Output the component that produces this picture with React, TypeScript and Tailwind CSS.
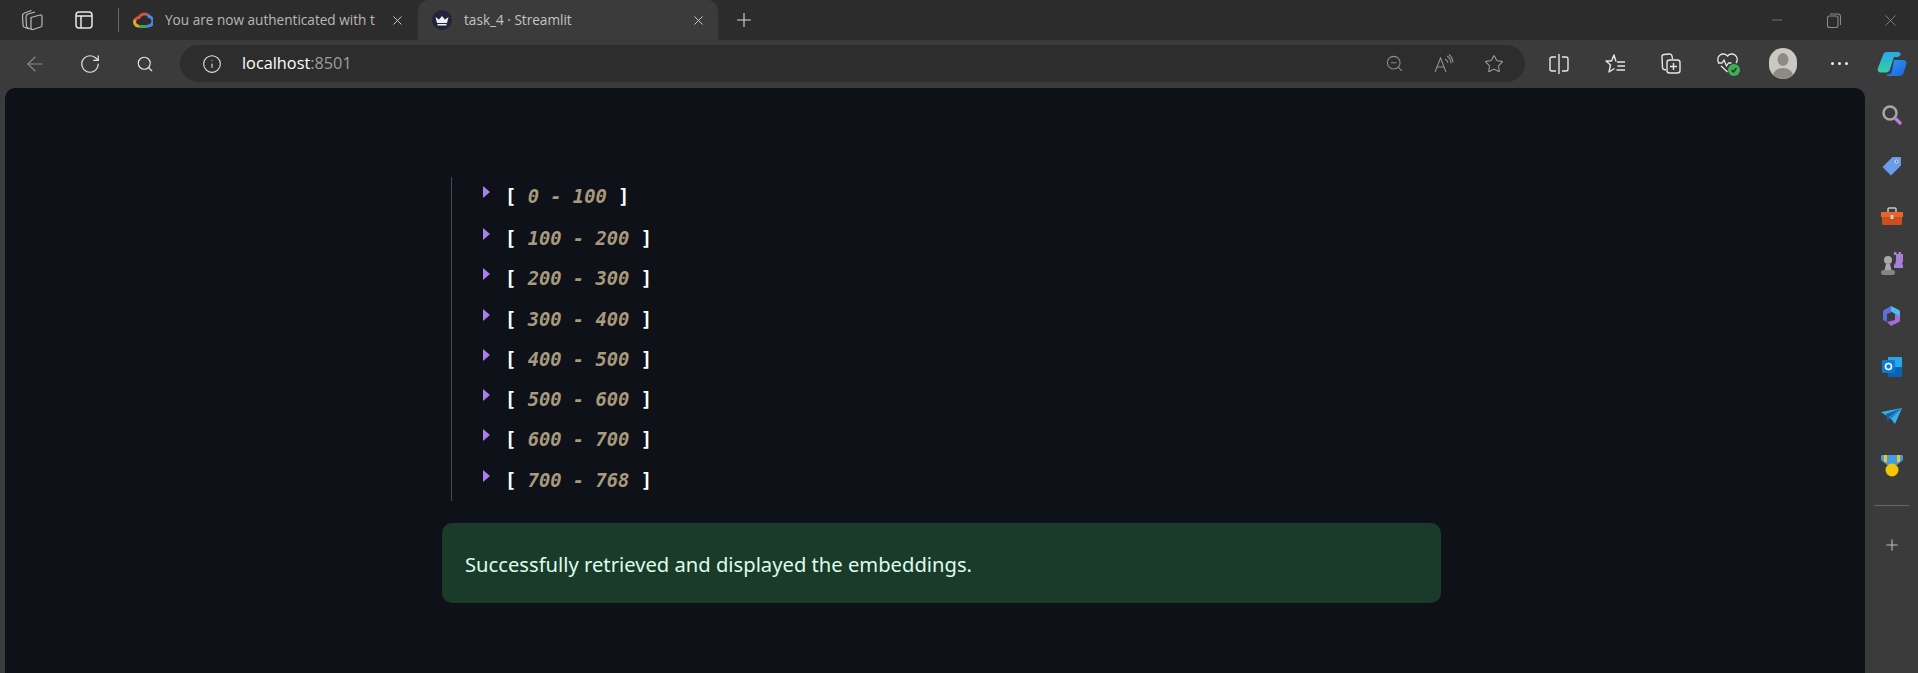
import React from 'react';
import { ArrowLeft, RotateCw, Search, Info, X, Plus, ZoomOut, Star, Minus } from 'lucide-react';

const ranges = ['0 - 100', '100 - 200', '200 - 300', '300 - 400', '400 - 500', '500 - 600', '600 - 700', '700 - 768'];

const Crown = () => (
    <div className="flex h-5 w-5 items-center justify-center rounded-full bg-[#23233a]">
        <svg width="14" height="11" viewBox="0 0 14 11"><path d="M0.500 2l3.500 2.500L7 1l3 3.500L13.500 2 12 8H2z M2.500 9h9v1.500h-9z" fill="#eee" /></svg>
    </div>
);

const GoogleCloud = () => (
    <svg width="20" height="16" viewBox="0 0 20 16" fill="none" strokeWidth="3">
        <path d="M6 14a4 4 0 0 1-3.500-6.500" stroke="#e8a91c" />
        <path d="M2.500 7.500a5 5 0 0 1 3.500-2 6 6 0 0 1 8-3" stroke="#d9503f" />
        <path d="M14 2.500a5 5 0 0 1 2 2 4.500 4.500 0 0 1-2 9.500" stroke="#4a86e8" />
        <path d="M6 14.500h8" stroke="#4a9c5d" />
    </svg>
);

const TabStack = () => (
    <svg width="22" height="22" viewBox="0 0 22 22" fill="none" stroke="#b8b8b8" strokeWidth="1.200">
        <path d="M8 20L3 18a2 2 0 0 1-1-2l-.500-9a3 3 0 0 1 2-3l7-2.500" />
        <path d="M11 20.500L7 19a2 2 0 0 1-1.500-2L5 8a3 3 0 0 1 2-3l7-2" />
        <path d="M10 8.500l9-2.500a1.500 1.500 0 0 1 2 1.500V16a2 2 0 0 1-1.500 2L12 20.500a1.500 1.500 0 0 1-2-1.500z" />
    </svg>
);

const ReadAloud = () => (
    <svg width="20" height="20" viewBox="0 0 20 20" fill="none" stroke="#8f8f8f" strokeWidth="1.100">
        <path d="M1 18L6.500 4 12 18M3 13h7" />
        <path d="M11 5a6 6 0 0 1 3 4M13 2a9 9 0 0 1 4 7.500M15 0.500a12 12 0 0 1 4 8" />
    </svg>
);

const Copilot = () => (
    <svg width="30" height="30" viewBox="0 0 30 30">
        <defs>
            <linearGradient id="cpA" x1="0" y1="0" x2="0" y2="1">
                <stop offset="0" stopColor="#2aa7ec" />
                <stop offset="1" stopColor="#36d0a0" />
            </linearGradient>
            <linearGradient id="cpB" x1="0" y1="0" x2="1" y2="1">
                <stop offset="0" stopColor="#2f9cf0" />
                <stop offset="1" stopColor="#1b62d8" />
            </linearGradient>
        </defs>
        <path d="M10 25l4-5 7-12-4 12z" fill="#1c3fc0" />
        <path d="M10 3h11c2 0 3 1.500 2.500 3L21 8h-4l-4 12c-.500 2-2 3.500-4 3.500H4c-2.500 0-4-2-3-4.500L6 6c.800-2 2-3 4-3z" fill="url(#cpA)" />
        <path d="M17 11h9c2 0 4 2 3.500 4l-3 9c-.800 2-2 3-4 3H12c-1.500 0-2.500-.500-2.500-1.500h2c2 0 3-1.500 3.500-3z" fill="url(#cpB)" />
    </svg>
);

const Sidebar = () => (
    <div className="flex w-[53px] flex-col items-center pt-[16px]">
        <div className="flex h-[22px] items-center">
            <svg width="22" height="22" viewBox="0 0 22 22" fill="none"><circle cx="9" cy="9" r="6.500" stroke="#a8a8a8" strokeWidth="2.500" /><path d="M15 15l4 4" stroke="#b47fd8" strokeWidth="3.500" strokeLinecap="round" /></svg>
        </div>
        <svg className="mt-[30px]" width="20" height="20" viewBox="0 0 20 20"><path d="M0.500 11L10 1.500a1 1 0 0 1 1-.500h7a1 1 0 0 1 1 1v7a1 1 0 0 1-.500 1L9 19.500z" fill="#6b9cec" /><circle cx="14.500" cy="5.500" r="2" fill="#ddd" /><circle cx="14.500" cy="5.500" r="1" fill="#4a5a80" /></svg>
        <svg className="mt-[31px]" width="22" height="18" viewBox="0 0 22 18"><path d="M7 5V2a1 1 0 0 1 1-1h6a1 1 0 0 1 1 1v3" fill="none" stroke="#c8c8c8" strokeWidth="1.500" /><path d="M0 5h22v5H0z" fill="#e8652a" /><path d="M1 10h20v7a1 1 0 0 1-1 1H2a1 1 0 0 1-1-1z" fill="#c9501c" /><rect x="9.500" y="8" width="3" height="4" fill="#ccc" /></svg>
        <svg className="mt-[27px]" width="24" height="24" viewBox="0 0 24 24"><path d="M14 0h2.500v2h2V0H21v2h2V0v9l-1 3 1 1v3h-9v-3l1-1 1-3V3h-2z" fill="#a77ed8" /><circle cx="8" cy="8" r="4" fill="#a8a8a8" /><path d="M6 12h4l1.500 6h-7z" fill="#a8a8a8" /><rect x="1" y="18" width="14" height="5" rx="2.500" fill="#858585" /></svg>
        <svg className="mt-[29px]" width="21" height="22" viewBox="0 0 21 22"><path d="M10 1L3 5a2 2 0 0 0-1 2v8l4 2V9l5-2z" fill="#5a6fd8" /><path d="M10 1l8 4a2 2 0 0 1 1 2v5l-8-5-1-1z" fill="#4cbde8" /><path d="M19 11v4a2 2 0 0 1-1 2l-8 4-4-4 8-2V9z" fill="#a06ed8" /></svg>
        <svg className="mt-[30px]" width="20" height="20" viewBox="0 0 20 20"><rect x="6" y="0" width="14" height="19" rx="1" fill="#28a8ea" /><path d="M6 10h14v9a1 1 0 0 1-1 1H7a1 1 0 0 1-1-1z" fill="#0a62b0" /><rect x="0" y="3" width="13" height="13" rx="1" fill="#0f78d4" /><circle cx="6.500" cy="9.500" r="3" fill="none" stroke="#fff" strokeWidth="1.600" /></svg>
        <svg className="mt-[31px]" width="22" height="16" viewBox="0 0 22 16"><path d="M0 4L21 0 14 16l-4-5z" fill="#35b0ee" /><path d="M5 6L21 0 8 9l-1 6z" fill="#1a5fa8" /><path d="M21 0L8 9l2 2z" fill="#1e86c4" /></svg>
        <svg className="mt-[31px]" width="22" height="22" viewBox="0 0 22 22"><path d="M1 0h20a1 1 0 0 1 1 1v4l-6 5H6L0 5V1a1 1 0 0 1 1-1z" fill="#3f9ee0" /><path d="M3 0h3v7H3zM16 0h3v7h-3z" fill="#f2c12e" /><circle cx="11" cy="15" r="6.500" fill="#f7c400" /></svg>
        <div className="mt-[28px] h-px w-[35px] bg-[#666]" />
        <Plus className="mt-[30px]" size={18} strokeWidth={1.400} color="#c0c0c0" />
    </div>
);

const App: React.FC = () => {
    return (
        <div className="flex h-[673px] w-[1918px] flex-col overflow-hidden bg-[#3b3b3b] font-['Open_Sans',sans-serif]">
            {/* tab strip */}
            <div className="flex h-10 shrink-0 items-center bg-[#2c2c2c]">
                <div className="flex w-[119px] items-center">
                    <div className="flex w-[64px] justify-center"><TabStack /></div>
                    <div className="flex w-[42px] justify-center">
                        <svg width="18" height="18" viewBox="0 0 18 18" fill="none" stroke="#e6e6e6" strokeWidth="1.500"><rect x="1" y="1" width="16" height="16" rx="3" /><path d="M1 5h16M6 5v12" /></svg>
                    </div>
                    <div className="ml-[13px] h-[24px] w-px bg-[#666]" />
                </div>
                <div className="flex h-10 w-[299px] items-center pl-[14px]">
                    <GoogleCloud />
                    <span className="ml-3 w-[216px] overflow-hidden whitespace-nowrap text-[13.600px] text-[#b8b8b8]">You are now authenticated with t</span>
                    <X className="ml-[9px]" size={15} strokeWidth={1.500} color="#d0d0d0" />
                </div>
                <div className="flex h-[45px] w-[300px] items-center self-start rounded-t-[10px] bg-[#3b3b3b] pb-[5px] pl-[14px]">
                    <Crown />
                    <span className="ml-3 w-[227px] text-[13.600px] text-[#c4c4c4]">task_4 · Streamlit</span>
                    <X size={15} strokeWidth={1.500} color="#d0d0d0" />
                </div>
                <Plus className="ml-[15px]" size={22} strokeWidth={1.200} color="#d8d8d8" />
                <div className="ml-auto flex items-center text-[#8a8a8a]">
                    <div className="flex w-[57px] justify-center"><Minus size={16} strokeWidth={1.100} /></div>
                    <div className="flex w-[57px] justify-center">
                        <svg width="14" height="15" viewBox="0 0 14 15" fill="none" stroke="#8a8a8a" strokeWidth="1.100"><rect x="0.500" y="3" width="10.500" height="11.500" rx="2" /><path d="M3 1h8a2.500 2.500 0 0 1 2.500 2.500V12" /></svg>
                    </div>
                    <div className="flex w-[56px] justify-center"><X size={19} strokeWidth={1.100} /></div>
                </div>
            </div>
            {/* address bar row */}
            <div className="flex h-[48px] shrink-0 items-start bg-[#3b3b3b] pt-[5px]">
                <div className="flex h-[37px] w-[180px] items-center">
                    <div className="flex w-[70px] justify-center"><ArrowLeft size={24} strokeWidth={1.100} color="#8a8a8a" /></div>
                    <div className="flex w-[40px] justify-center"><RotateCw size={22} strokeWidth={1.300} color="#e8e8e8" /></div>
                    <div className="flex w-[70px] justify-center"><Search size={18} strokeWidth={1.500} color="#e8e8e8" /></div>
                </div>
                <div className="flex h-[37px] w-[1345px] items-center rounded-full bg-[#2d2d2d] pl-[22px]">
                    <Info size={20} strokeWidth={1.300} color="#e6e6e6" />
                    <span className="ml-[20px] text-[16.300px] text-white">localhost<span className="text-[#9c9c9c]">:8501</span></span>
                    <div className="ml-auto flex items-center pr-[6px]">
                        <div className="flex w-[50px] justify-center"><ZoomOut size={19} strokeWidth={1.300} color="#8f8f8f" /></div>
                        <div className="flex w-[50px] justify-center"><ReadAloud /></div>
                        <div className="flex w-[50px] justify-center"><Star size={20} strokeWidth={1.300} color="#9a9a9a" /></div>
                    </div>
                </div>
                <div className="flex h-[37px] flex-1 items-center pl-[6px]">
                    <div className="flex w-[56px] justify-center">
                        <svg width="20" height="22" viewBox="0 0 20 22" fill="none" stroke="#e6e6e6" strokeWidth="1.400"><path d="M7 4H3a2 2 0 0 0-2 2v10a2 2 0 0 0 2 2h4M13 4h4a2 2 0 0 1 2 2v10a2 2 0 0 1-2 2h-4M10 1v20" /></svg>
                    </div>
                    <div className="flex w-[56px] justify-center">
                        <svg width="21" height="21" viewBox="0 0 21 21" fill="none" stroke="#e6e6e6" strokeWidth="1.400" strokeLinejoin="round"><path d="M11 8.500L9 2 6.500 8H1l4.500 4L4 19l5.500-3.500" /><path d="M12 9h8M12.500 13h7.500M11.500 17h8.500" /></svg>
                    </div>
                    <div className="flex w-[56px] justify-center">
                        <svg width="20" height="22" viewBox="0 0 20 22" fill="none" stroke="#e6e6e6" strokeWidth="1.400"><path d="M5 17l-2-.500a2 2 0 0 1-1.500-2L1 4a2 2 0 0 1 2-2.500L8.500 1A2.500 2.500 0 0 1 11 3l.500 3" /><rect x="6" y="7" width="13" height="13" rx="2.500" /><path d="M12.500 10v7M9 13.500h7" /></svg>
                    </div>
                    <div className="flex w-[56px] justify-center">
                        <div className="relative h-[22px] w-[21px]">
                            <svg width="21" height="20" viewBox="0 0 21 20" fill="none" stroke="#e6e6e6" strokeWidth="1.300"><path d="M2 10a5 5 0 0 1 8.500-7 5 5 0 0 1 8.500 7M4 13l6.500 6M1 10h4l2-3 2.500 6 2-3h3" /></svg>
                            <div className="absolute left-[11px] top-[11px] flex h-[12px] w-[12px] items-center justify-center rounded-full bg-[#3fae55]">
                                <svg width="8" height="8" viewBox="0 0 8 8" fill="none" stroke="#1f2a22" strokeWidth="1.300"><path d="M1.500 4l2 2 3-4" /></svg>
                            </div>
                        </div>
                    </div>
                    <div className="flex w-[56px] justify-center">
                        <div className="flex h-[31px] w-[28px] overflow-hidden rounded-full bg-[#c9c8c3]">
                            <svg width="28" height="31" viewBox="0 0 28 31"><ellipse cx="14" cy="11.500" rx="5.500" ry="6.500" fill="#8d8a85" /><ellipse cx="14" cy="28" rx="10" ry="8" fill="#8d8a85" /></svg>
                        </div>
                    </div>
                    <div className="flex w-[56px] justify-center gap-[4px]">
                        <span className="h-[3px] w-[3px] rounded-full bg-[#eee]" />
                        <span className="h-[3px] w-[3px] rounded-full bg-[#eee]" />
                        <span className="h-[3px] w-[3px] rounded-full bg-[#eee]" />
                    </div>
                    <div className="flex w-[50px] justify-center"><Copilot /></div>
                </div>
            </div>
            {/* page + sidebar */}
            <div className="flex min-h-0 flex-1 pl-[5px]">
                <div className="flex-1 rounded-t-[10px] bg-[#0e1117] pt-[16px]">
                    <div className="ml-[437px] mt-[73px] w-[999px]">
                        <div className="ml-[9px] h-[324px] border-l border-[#4a4a45] pl-[31px] font-['DejaVu_Sans_Mono',monospace] text-[18.800px] font-bold">
                            <div className="pt-[2px]">
                                {ranges.map((r, i) => (
                                    <div key={r} className={`flex items-start ${i === 0 ? 'h-[42px]' : 'h-[40.300px]'}`}>
                                        <span className="mt-[7px] h-0 w-0 border-y-[6.500px] border-l-[7px] border-y-transparent border-l-[#a97ff0]" />
                                        <span className="ml-[15px] mt-[6px] whitespace-pre leading-[24px] text-white">[ <i className="text-[#a89a7d]">{r}</i> ]</span>
                                    </div>
                                ))}
                            </div>
                        </div>
                        <div className="mt-[22px] flex h-[80px] w-[999px] items-center rounded-[10px] bg-[#1a3b2a] pl-[23px] pt-[3px] font-['Noto_Sans',sans-serif] text-[20.200px] text-[#dffbea]">
                            Successfully retrieved and displayed the embeddings.
                        </div>
                    </div>
                </div>
                <Sidebar />
            </div>
        </div>
    );
};

export default App;
